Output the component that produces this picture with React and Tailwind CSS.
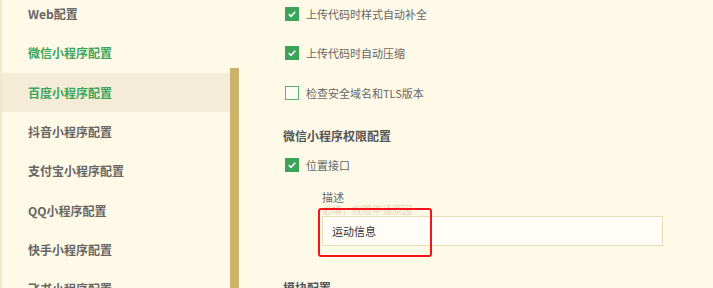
import React from "react";

const menu = [
  { name: "Web配置" },
  { name: "微信小程序配置", green: true },
  { name: "百度小程序配置", green: true, active: true },
  { name: "抖音小程序配置" },
  { name: "支付宝小程序配置" },
  { name: "QQ小程序配置" },
  { name: "快手小程序配置" },
  { name: "飞书小程序配置" },
];

function CheckBox({ checked }) {
  return checked ? (
    <span className="w-[14px] h-[14px] bg-[#3ca45a] flex items-center justify-center shrink-0">
      <svg width="10" height="10" viewBox="0 0 10 10">
        <path d="M1.8 5.2 L4 7.3 L8.3 2.8" fill="none" stroke="#fff" strokeWidth="1.6" />
      </svg>
    </span>
  ) : (
    <span className="w-[14px] h-[14px] border border-[#5cb274] bg-[#fffdf5] shrink-0"></span>
  );
}

function Option({ checked, label }) {
  return (
    <div className="h-[39.5px] shrink-0 flex items-center gap-[7px] pl-[45px]">
      <CheckBox checked={checked} />
      <span className="text-[11px] text-[#666]">{label}</span>
    </div>
  );
}

export default function App() {
  return (
    <div
      className="w-[713px] h-[288px] overflow-hidden flex bg-[#fff9e8]"
      style={{ fontFamily: '"Noto Sans CJK SC", "Noto Sans", sans-serif' }}
    >
      <div className="flex w-[240px] shrink-0 border-l-2 border-[#f1e8c8]">
        <div className="w-[228px] flex flex-col -mt-[5.5px]">
          {menu.map((m) => (
            <div
              key={m.name}
              className={`h-[39.3px] shrink-0 flex items-center pl-[26px] text-[12px] font-bold ${
                m.active ? "bg-[#f4ecd6]" : ""
              } ${m.green ? "text-[#3aa55c]" : "text-[#666]"}`}
            >
              {m.name}
            </div>
          ))}
        </div>
        <div className="w-[9px] pt-[68px]">
          <div className="w-[9px] h-[230px] bg-[#cdb36a]"></div>
        </div>
        <div className="w-[1px] bg-[#fffcf2]"></div>
      </div>

      <div className="flex-1 flex flex-col -mt-[6px]">
        <Option checked label="上传代码时样式自动补全" />
        <Option checked label="上传代码时自动压缩" />
        <Option label="检查安全域名和TLS版本" />

        <div className="mt-[14px] h-[19px] shrink-0 flex items-center pl-[43px] text-[12px] font-bold text-[#555]">
          微信小程序权限配置
        </div>

        <div className="mt-[12.5px] h-[14px] shrink-0 flex items-center gap-[7px] pl-[45px]">
          <CheckBox checked />
          <span className="text-[11px] text-[#666]">位置接口</span>
        </div>

        <div className="pl-[82px] mt-[18px] relative shrink-0">
          <div className="h-[14px] leading-[14px] text-[11px] text-[#666]">描述</div>
          <div className="h-[12px] leading-[12px] text-[10px] text-[#e2d7bb]">必填，权限申请原因</div>
          <div className="w-[341px] h-[30px] border border-[#e6dcb6] bg-[#fffdf6] flex items-center pl-[9px] text-[11px] text-[#333]">
            运动信息
          </div>
          <div className="absolute left-[78px] top-[18px] w-[114px] h-[49px] border-2 border-[#f5141e] rounded-[3px]"></div>
        </div>

        <div className="mt-[34px] shrink-0 pl-[43px] text-[12px] font-bold text-[#555] leading-[16px]">
          模块配置
        </div>
      </div>
    </div>
  );
}
